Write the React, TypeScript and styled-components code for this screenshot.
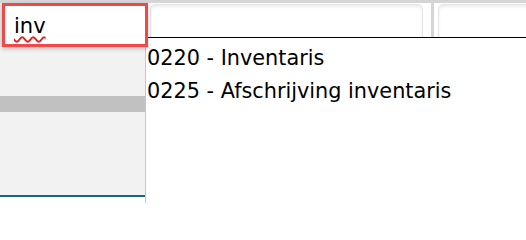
import React from "react";
import styled, { createGlobalStyle } from "styled-components";

const Global = createGlobalStyle`
  html, body { margin: 0; padding: 0; background: #ffffff; }
  body { font-family: "DejaVu Sans", Verdana, sans-serif; }
`;

const Page = styled.div`
  position: relative;
  width: 526px;
  height: 203px;
  overflow: hidden;
  background: #ffffff;
  display: flex;
  flex-direction: column;
`;

const Header = styled.div`
  display: flex;
  height: 47px;
  border-top: 3px solid #d5d5d5;
  box-sizing: border-box;
  flex-shrink: 0;
`;

const InputCell = styled.div`
  position: relative;
  z-index: 2;
  width: 148px;
  flex-shrink: 0;
  background: #ebebeb;
  padding-left: 2px;
  box-sizing: border-box;
`;

const SearchBox = styled.div`
  height: 44px;
  width: 146px;
  box-sizing: border-box;
  border: 3px solid #ee4a4a;
  background: #ffffff;
  box-shadow: 0 2px 4px rgba(0, 0, 0, 0.22);
  padding: 8px 0 0 9px;
  font-size: 21px;
  line-height: 24px;
  color: #000000;
`;

const Misspelled = styled.span`
  text-decoration-line: underline;
  text-decoration-style: wavy;
  text-decoration-color: #e02020;
  text-decoration-thickness: 1.5px;
  text-underline-offset: 3px;
`;

const FieldCell = styled.div<{ $width?: number }>`
  display: flex;
  padding: 1px 0 0 ${(p) => (p.$width ? 2 : 4)}px;
  box-sizing: border-box;
  ${(p) => (p.$width ? `width: ${p.$width}px; flex-shrink: 0;` : "flex: 1;")}
`;

const FieldBox = styled.div`
  flex: 1;
  height: 40px;
  border: 1px solid #e6e6e6;
  border-radius: 5px;
  background: #ffffff;
  box-shadow: inset 0 2px 3px rgba(0, 0, 0, 0.08);
  margin-right: 8px;
`;

const FieldBoxOpen = styled(FieldBox)`
  margin-right: -10px;
`;

const Divider = styled.div`
  width: 3px;
  flex-shrink: 0;
  background: #d5d5d5;
`;

const Body = styled.div`
  flex: 1;
  display: flex;
`;

const SideColumn = styled.div`
  width: 145px;
  flex-shrink: 0;
  border-right: 1px solid #b9cadb;
  display: flex;
  flex-direction: column;
`;

const SidePanel = styled.div`
  height: 150px;
  background: #f2f2f2;
  border-bottom: 2px solid #1c6584;
  padding-top: 49px;
  box-sizing: border-box;
`;

const SideBand = styled.div`
  height: 16px;
  background: #c1c1c1;
`;

const Content = styled.div`
  flex: 1;
  background: #ffffff;
`;

const Dropdown = styled.ul`
  position: absolute;
  z-index: 1;
  top: 37px;
  left: 146px;
  right: 0;
  bottom: 0;
  margin: 0;
  padding: 4px 0 0 1px;
  list-style: none;
  background: #ffffff;
  border-top: 1px solid #000000;
`;

const Option = styled.li`
  height: 33px;
  line-height: 33px;
  font-size: 20.8px;
  color: #000000;
  white-space: nowrap;
`;

const options = ["0220 - Inventaris", "0225 - Afschrijving inventaris"];

export default function App() {
  return (
    <Page>
      <Global />
      <Header>
        <InputCell>
          <SearchBox>
            <Misspelled>inv</Misspelled>
          </SearchBox>
        </InputCell>
        <FieldCell $width={283}>
          <FieldBox />
        </FieldCell>
        <Divider />
        <FieldCell>
          <FieldBoxOpen />
        </FieldCell>
      </Header>
      <Body>
        <SideColumn>
          <SidePanel>
            <SideBand />
          </SidePanel>
        </SideColumn>
        <Content />
      </Body>
      <Dropdown>
        {options.map((o) => (
          <Option key={o}>{o}</Option>
        ))}
      </Dropdown>
    </Page>
  );
}
